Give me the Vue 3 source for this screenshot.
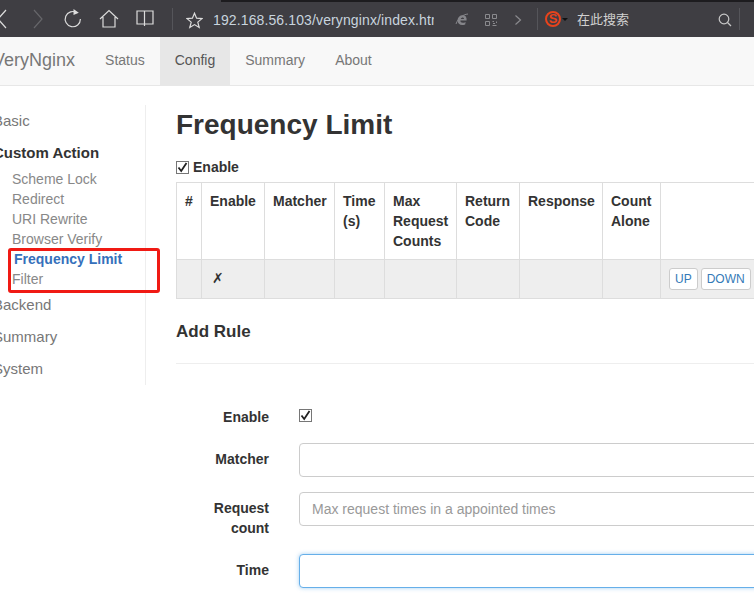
<template>
  <div class="window">
    <div class="browser-bar">
      <div class="top-strip"></div>
      <svg class="ico back" width="10" height="20" viewBox="0 0 10 20"><path d="M6 1 L-2 10 L6 19" /></svg>
      <svg class="ico fwd" width="12" height="20" viewBox="0 0 12 20"><path d="M2 1 L10 10 L2 19" /></svg>
      <svg class="ico reload" width="20" height="20" viewBox="0 0 20 20"><path d="M14 3.8 A7.6 7.6 0 1 0 17.4 10" /><path class="fill" d="M10.5 0 L15.8 3.8 L10.5 6 Z" /></svg>
      <svg class="ico home" width="20" height="20" viewBox="0 0 20 20"><path d="M1 10 L10 1.5 L19 10 M4 8 V18 H16 V8" /></svg>
      <svg class="ico book" width="18" height="18" viewBox="0 0 18 18"><path d="M1 2 H8.5 V15 H1 Z M8.5 2 H17 V15 H8.5 M8.5 15 V17" /></svg>
      <div class="sep sep-a"></div>
      <svg class="ico star" width="17" height="17" viewBox="0 0 17 17"><path d="M8.5 1.2 L10.6 6.2 L16 6.6 L11.8 10.1 L13.2 15.5 L8.5 12.6 L3.8 15.5 L5.2 10.1 L1 6.6 L6.4 6.2 Z" /></svg>
      <div class="url">192.168.56.103/veryngin&#120;/index.html</div>
      <svg class="ie" width="14" height="14" viewBox="0 0 14 14"><path d="M2.6 7.6 C2.6 4.2 5 2.2 7.8 2.2 C10.4 2.2 12 4 11.6 7.6 H5.4 C5.2 9.8 8 10.6 10.6 8.9 L10.2 11.4 C6.2 13.2 2.6 11.4 2.6 7.6 Z M5.8 5.9 H9 C9 3.9 6.4 3.9 5.8 5.9 Z" fill-rule="evenodd" /><path class="swoosh" d="M1 11 C3 5 8 1.5 13 1" /></svg>
      <svg class="qr" width="12" height="12" viewBox="0 0 12 12"><path d="M0.5 0.5 H4.5 V4.5 H0.5 Z M7.5 0.5 H11.5 V4.5 H7.5 Z M0.5 7.5 H4.5 V11.5 H0.5 Z M7.5 7.5 H9 M11.5 7.5 V9 M7.5 11.5 H11.5 M8 9.5 H10" /></svg>
      <svg class="ico more" width="8" height="12" viewBox="0 0 8 12"><path d="M1.5 1.5 L6.5 6 L1.5 10.5" /></svg>
      <div class="sep sep-b"></div>
      <div class="sogou"><span>S</span></div>
      <div class="caret"></div>
      <div class="search-text">在此搜索</div>
      <svg class="ico mag" width="14" height="14" viewBox="0 0 14 14"><circle cx="6" cy="6" r="4.8" /><path d="M9.5 9.5 L13 13" /></svg>
      <div class="sep sep-c"></div>
    </div>

    <div class="page">
      <nav class="navbar">
        <a class="brand">VeryNginx</a>
        <a v-for="item in navItems" :key="item" class="nav-link" :class="{ active: item === 'Config' }">{{ item }}</a>
      </nav>

      <div class="body-row">
        <aside class="sidebar">
          <div class="side-head">Basic</div>
          <div class="side-head strong">Custom Action</div>
          <div class="sub-list">
            <a v-for="s in subItems" :key="s" class="sub" :class="{ current: s === 'Frequency Limit' }">{{ s }}</a>
          </div>
          <div class="side-head">Backend</div>
          <div class="side-head">Summary</div>
          <div class="side-head">System</div>
        </aside>

        <main class="content">
          <h1>Frequency Limit</h1>
          <label class="enable-line"><span class="check"><svg width="13" height="13" viewBox="0 0 13 13"><path d="M2.5 6.5 L5.2 10 L10.5 2" /></svg></span>Enable</label>

          <table class="rules">
            <colgroup>
              <col v-for="(w, i) in colWidths" :key="i" :style="{ width: w + 'px' }" />
            </colgroup>
            <thead>
              <tr>
                <th>#</th>
                <th>Enable</th>
                <th>Matcher</th>
                <th>Time (s)</th>
                <th>Max Request Counts</th>
                <th>Return Code</th>
                <th>Response</th>
                <th>Count Alone</th>
                <th></th>
              </tr>
            </thead>
            <tbody>
              <tr>
                <td></td>
                <td class="cross">✗</td>
                <td></td>
                <td></td>
                <td></td>
                <td></td>
                <td></td>
                <td></td>
                <td class="actions"><button>UP</button><button>DOWN</button></td>
              </tr>
            </tbody>
          </table>

          <h3>Add Rule</h3>
          <div class="rule-line"></div>

          <div class="form">
            <div class="form-row enable-row">
              <label>Enable</label>
              <span class="check"><svg width="13" height="13" viewBox="0 0 13 13"><path d="M2.5 6.5 L5.2 10 L10.5 2" /></svg></span>
            </div>
            <div class="form-row matcher-row">
              <label>Matcher</label>
              <div class="input"></div>
            </div>
            <div class="form-row count-row">
              <label>Request count</label>
              <div class="input placeholder">Max request times in a appointed times</div>
            </div>
            <div class="form-row time-row">
              <label>Time</label>
              <div class="input focused"></div>
            </div>
          </div>
        </main>
      </div>
    </div>

    <div class="red-box"></div>
  </div>
</template>

<script setup>
const navItems = ["Status", "Config", "Summary", "About"]
const subItems = ["Scheme Lock", "Redirect", "URI Rewrite", "Browser Verify", "Frequency Limit", "Filter"]
const colWidths = [25, 63, 70, 50, 72, 63, 83, 58, 140]
</script>

<style>
html, body {
  margin: 0;
  background: #fff;
}
</style>

<style scoped>
.window {
  position: relative;
  width: 754px;
  height: 599px;
  overflow: hidden;
  font-family: "Liberation Sans", Arial, sans-serif;
  font-size: 14px;
  line-height: 20px;
  color: #333;
  background: #fff;
}

.browser-bar {
  position: relative;
  height: 37px;
  background: #3f3e43;
}

.top-strip {
  position: absolute;
  left: 221px;
  right: 0;
  top: 0;
  height: 2px;
  background: #1d1c1f;
}

.ico {
  position: absolute;
  fill: none;
  stroke: #dcdcdc;
  stroke-width: 1.2;
}

.ico .fill {
  fill: #dcdcdc;
  stroke: none;
}

.back { left: 0; top: 9px; }
.fwd { left: 32px; top: 9px; stroke: #66666a; }
.reload { left: 63px; top: 9px; }
.home { left: 99px; top: 9px; }
.book { left: 136px; top: 9px; }
.star { left: 186px; top: 12px; }
.more { left: 514px; top: 14px; stroke: #8a8a8e; }
.mag { left: 718px; top: 13px; stroke: #c8c8c8; }

.sep {
  position: absolute;
  top: 8px;
  width: 1px;
  height: 22px;
  background: #55555a;
}
.sep-a { left: 172px; }
.sep-b { left: 537px; }
.sep-c { left: 739px; }

.url {
  position: absolute;
  left: 213px;
  top: 10px;
  width: 221px;
  overflow: hidden;
  white-space: nowrap;
  font-size: 14px;
  letter-spacing: 0.12px;
  color: #c8d4de;
}

.ie {
  position: absolute;
  left: 455px;
  top: 13px;
  fill: #85858a;
}

.ie .swoosh {
  fill: none;
  stroke: #85858a;
  stroke-width: 1;
}

.qr {
  position: absolute;
  left: 485px;
  top: 14px;
  fill: none;
  stroke: #8a8a8e;
}

.sogou {
  position: absolute;
  left: 545px;
  top: 11px;
  width: 12px;
  height: 12px;
  border: 2px solid #e8431c;
  border-radius: 50%;
  display: flex;
  align-items: center;
  justify-content: center;
  font-size: 13px;
  font-weight: bold;
  color: #e8431c;
}

.caret {
  position: absolute;
  left: 562px;
  top: 18px;
  border-left: 3px solid transparent;
  border-right: 3px solid transparent;
  border-top: 3px solid #111;
}

.search-text {
  position: absolute;
  left: 577px;
  top: 9px;
  font-family: "Noto Sans CJK SC", sans-serif;
  font-size: 13px;
  color: #d0d0d0;
}

.page {
  margin-left: -22px;
  width: 1000px;
}

.navbar {
  display: flex;
  height: 48px;
  background: #f8f8f8;
  border-bottom: 1px solid #e7e7e7;
  line-height: 47px;
}

.brand {
  padding: 0 15px;
  font-size: 18px;
  color: #777;
}

.nav-link {
  padding: 0 15px;
  color: #777;
}

.nav-link.active {
  background: #e7e7e7;
  color: #555;
}

.body-row {
  display: flex;
  padding-top: 19px;
}

.sidebar {
  width: 168px;
  height: 280px;
  box-sizing: border-box;
  border-right: 1px solid #eee;
  padding-left: 15px;
  padding-top: 6px;
  flex-shrink: 0;
}

.side-head {
  font-size: 15px;
  line-height: 20px;
  color: #777;
  margin-bottom: 12px;
}

.side-head.strong {
  font-weight: bold;
  color: #333;
}

.sub-list {
  display: flex;
  flex-direction: column;
  margin: -6px 0 6px 19px;
}

.sub {
  color: #888;
  line-height: 20px;
}

.sub.current {
  font-weight: bold;
  color: #3570bb;
  padding-left: 2px;
}

.content {
  padding-left: 30px;
  flex: 1;
}

h1 {
  margin: 1px 0 0;
  font-size: 28px;
  line-height: 38px;
  font-weight: bold;
}

.enable-line {
  display: flex;
  align-items: center;
  margin: 13px 0 5px;
  font-weight: bold;
  height: 20px;
}

.check {
  display: inline-block;
  width: 11px;
  height: 11px;
  border: 1px solid #767676;
  background: #fff;
  position: relative;
  margin-right: 4px;
}

.check svg {
  position: absolute;
  left: -1px;
  top: -1px;
  fill: none;
  stroke: #222;
  stroke-width: 1.8;
}

.rules {
  border-collapse: collapse;
  table-layout: fixed;
  width: 624px;
}

.rules th,
.rules td {
  border: 1px solid #ddd;
  padding: 8px;
  text-align: left;
  vertical-align: top;
  line-height: 20px;
}

.rules th {
  height: 60px;
}

.rules tbody td {
  background: #eee;
  height: 22px;
}

.cross {
  padding-left: 10px !important;
}

.actions {
  white-space: nowrap;
}

.actions button {
  font-family: inherit;
  font-size: 12px;
  line-height: 18px;
  height: 22px;
  padding: 1px 5px;
  margin-right: 3px;
  color: #337ab7;
  background: #fff;
  border: 1px solid #ccc;
  border-radius: 3px;
}

h3 {
  margin: 23px 0 0;
  font-size: 17px;
  line-height: 20px;
  font-weight: bold;
}

.rule-line {
  height: 1px;
  background: #eee;
  margin-top: 21px;
}

.form-row {
  display: flex;
  align-items: flex-start;
}

.form-row label {
  width: 93px;
  text-align: right;
  font-weight: bold;
  margin-right: 30px;
  flex-shrink: 0;
}

.enable-row {
  margin-top: 43px;
  height: 20px;
}

.enable-row .check {
  margin-top: 2px;
}

.matcher-row {
  margin-top: 16px;
}

.matcher-row label,
.count-row label,
.time-row label {
  padding-top: 6px;
}

.count-row {
  margin-top: 15px;
}

.time-row {
  margin-top: 16px;
}

.input {
  width: 500px;
  height: 32px;
  border: 1px solid #ccc;
  border-radius: 4px;
  background: #fff;
}

.placeholder {
  color: #999;
  line-height: 32px;
  padding-left: 12px;
}

.focused {
  border-color: #66afe9;
  box-shadow: 0 0 4px rgba(102, 175, 233, 0.6);
}

.red-box {
  position: absolute;
  left: 8px;
  top: 248px;
  width: 146px;
  height: 39px;
  border: 3px solid #f01a14;
  border-radius: 3px;
}
</style>
